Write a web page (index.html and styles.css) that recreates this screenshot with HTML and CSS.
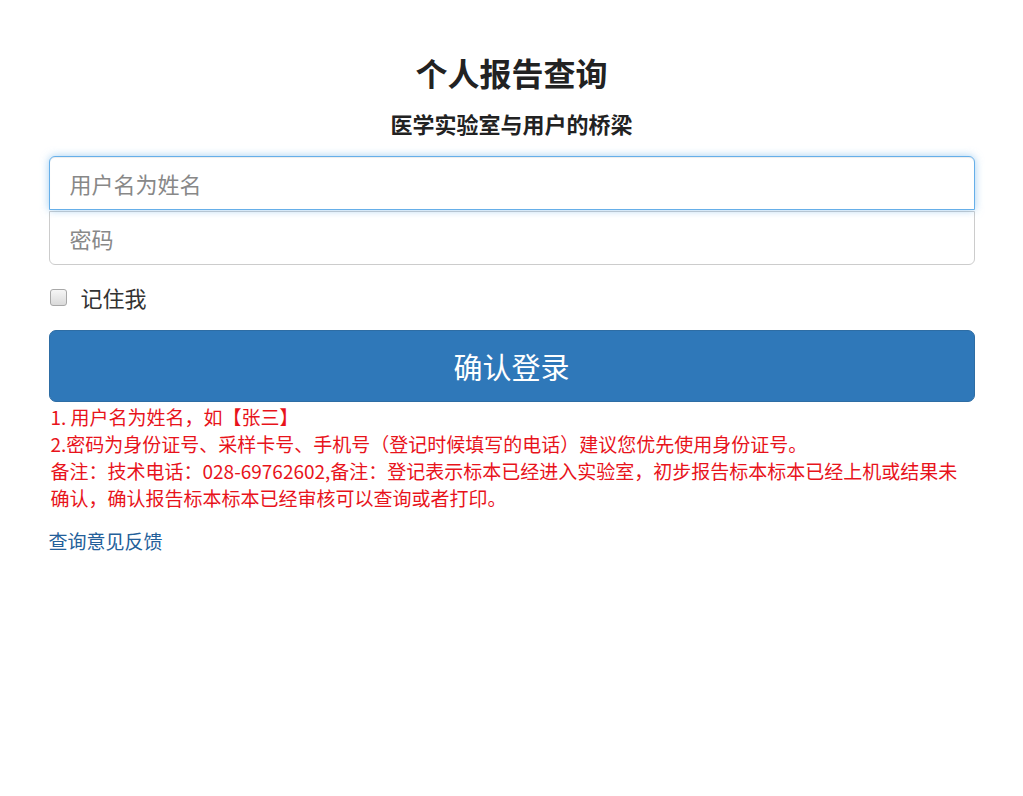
FILE: index.html
```html
<!DOCTYPE html>
<html lang="zh-CN">
<head>
  <meta charset="UTF-8" />
  <title>个人报告查询</title>
  <link rel="stylesheet" href="styles.css">
</head>
<body>
  <div class="container">
    <form class="form-signin">
      <h2 class="form-title">个人报告查询</h2>
      <h4 class="form-subtitle">医学实验室与用户的桥梁</h4>

      <input type="text" class="form-control input-top focused" placeholder="用户名为姓名" />
      <input type="password" class="form-control input-bottom" placeholder="密码" />

      <label class="remember">
        <input type="checkbox" class="check" />
        <span>记住我</span>
      </label>

      <button type="button" class="btn-login">确认登录</button>

      <div class="notes">
        1. 用户名为姓名，如【张三】<br/>
        2.密码为身份证号、采样卡号、手机号（登记时候填写的电话）建议您优先使用身份证号。<br/>
        备注：技术电话：028-69762602,备注：登记表示标本已经进入实验室，初步报告标本标本已经上机或结果未确认，确认报告标本标本已经审核可以查询或者打印。
      </div>

      <a class="feedback" href="#">查询意见反馈</a>
    </form>
  </div>
</body>
</html>
```

FILE: styles.css
```css
html, body {
  margin: 0;
  padding: 0;
  background: #fff;
  font-family: "Noto Sans CJK SC", "Noto Sans", "Liberation Sans", sans-serif;
  color: #333;
}

.container {
  width: 926px;
  margin: 0 auto;
  padding-top: 55px;
}

.form-signin {
  display: flex;
  flex-direction: column;
}

.form-title {
  margin: 0;
  font-size: 32px;
  line-height: 35px;
  font-weight: 700;
  text-align: center;
  color: #222;
}

.form-subtitle {
  margin: 21px 0 0;
  font-size: 22px;
  line-height: 24px;
  font-weight: 700;
  text-align: center;
  color: #222;
}

.form-control {
  display: block;
  box-sizing: border-box;
  width: 100%;
  height: 54px;
  margin: 0;
  padding: 0 20px;
  font-family: inherit;
  font-size: 22px;
  color: #555;
  background: #fff;
  border: 1px solid #ccc;
  outline: none;
}

.form-control::placeholder {
  color: #888;
}

.input-top {
  margin-top: 21px;
  border-radius: 6px 6px 0 0;
}

.input-bottom {
  margin-top: 1px;
  border-radius: 0 0 6px 6px;
}

.focused {
  position: relative;
  border-color: #66afe9;
  box-shadow: inset 0 1px 1px rgba(0, 0, 0, .075), 0 0 8px rgba(102, 175, 233, .6);
}

.remember {
  display: flex;
  align-items: center;
  gap: 14px;
  margin-top: 18px;
  padding-left: 1px;
  font-size: 22px;
  line-height: 28px;
  color: #333;
}

.check {
  appearance: none;
  -webkit-appearance: none;
  box-sizing: border-box;
  width: 17px;
  height: 17px;
  margin: 0;
  border: 1px solid #a8a8a8;
  border-radius: 3px;
  background: linear-gradient(#f6f6f6, #dadada);
}

.btn-login {
  margin-top: 19px;
  height: 72px;
  width: 100%;
  border: 1px solid #2e6da4;
  border-radius: 7px;
  background: #2f78b9;
  color: #fff;
  font-family: inherit;
  font-size: 29px;
  cursor: pointer;
}

.notes {
  margin-top: 1px;
  padding-left: 2px;
  font-size: 19px;
  line-height: 27px;
  color: #e8131b;
}

.feedback {
  margin-top: 16px;
  font-size: 19px;
  line-height: 27px;
  color: #23609a;
  text-decoration: none;
}
```
